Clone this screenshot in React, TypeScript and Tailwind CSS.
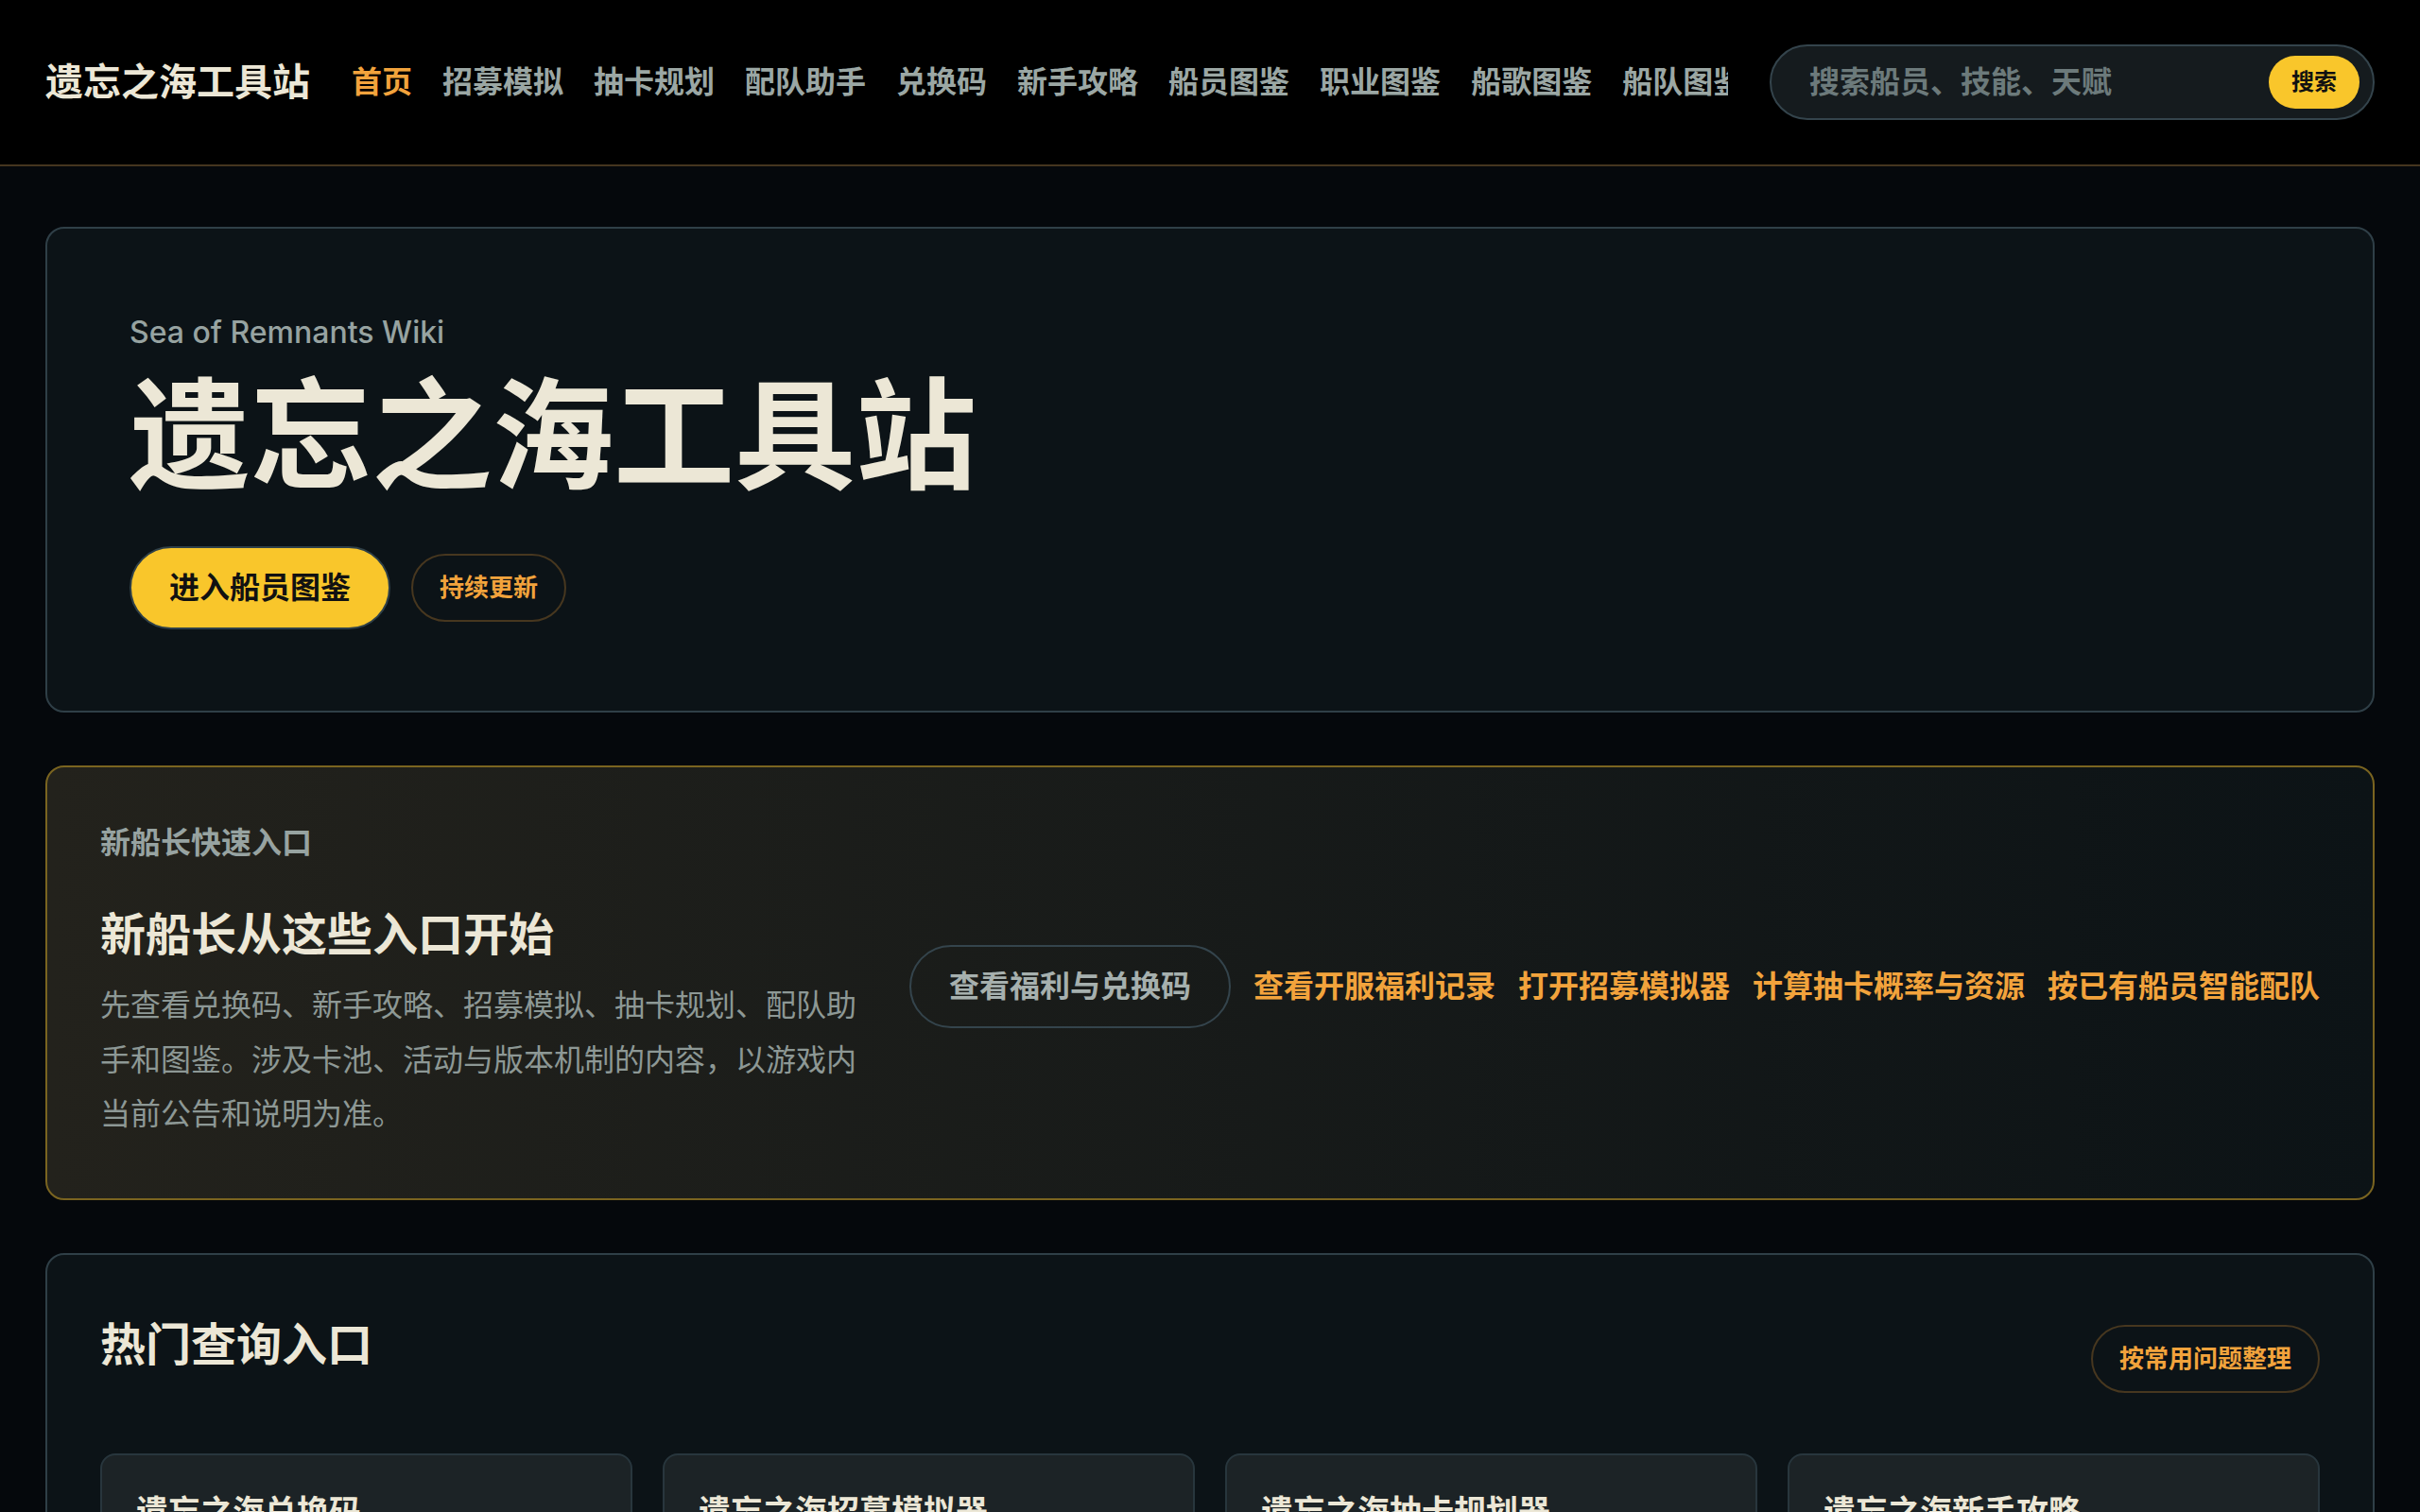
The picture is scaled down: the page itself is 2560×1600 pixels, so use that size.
const navItems = ['首页', '招募模拟', '抽卡规划', '配队助手', '兑换码', '新手攻略', '船员图鉴', '职业图鉴', '船歌图鉴', '船队图鉴', '更新日志'];

const quickLinks = ['查看开服福利记录', '打开招募模拟器', '计算抽卡概率与资源', '按已有船员智能配队'];

const hotCards = [
    { title: '遗忘之海兑换码', desc: '汇总当前可用的礼包码与领取方式，过期兑换码单独标注。' },
    { title: '遗忘之海招募模拟器', desc: '模拟不同卡池的招募结果，提前感受出货节奏。' },
    { title: '遗忘之海抽卡规划器', desc: '按现有资源估算抽数与保底进度，合理安排投入。' },
    { title: '遗忘之海新手攻略', desc: '从开局流程到航线推进，帮助新船长少走弯路。' },
];

export default function App() {
    return (
        <div className="h-screen overflow-hidden bg-[#05080c] font-['Inter','Noto_Sans_CJK_SC',sans-serif] text-[#ece7d6]">
            <header className="flex h-[176px] items-center gap-[44px] border-b-2 border-[#45351f] bg-black px-[48px]">
                <a className="shrink-0 text-[40px] font-bold leading-none text-[#ece7d6]">遗忘之海工具站</a>
                <nav className="flex min-w-0 flex-1 gap-[32px] overflow-hidden whitespace-nowrap">
                    {navItems.map((item, i) => (
                        <a
                            key={item}
                            className={
                                i === 0
                                    ? 'shrink-0 text-[32px] font-semibold leading-[48px] text-[#f2a33c]'
                                    : 'shrink-0 text-[32px] font-semibold leading-[48px] text-[#9ba7a4]'
                            }
                        >
                            {item}
                        </a>
                    ))}
                </nav>
                <form className="flex h-[80px] w-[640px] shrink-0 items-center rounded-full border-2 border-[#34444c] bg-[#151b1e] py-[10px] pl-[40px] pr-[14px]">
                    <input
                        placeholder="搜索船员、技能、天赋"
                        className="min-w-0 flex-1 bg-transparent text-[32px] font-semibold text-[#d8dcd8] placeholder:text-[#6c7a7b] focus:outline-none"
                    />
                    <button type="button" className="h-[56px] w-[96px] shrink-0 rounded-full bg-[#f9c62b] text-[24px] font-bold text-[#111]">
                        搜索
                    </button>
                </form>
            </header>

            <main className="flex flex-col gap-[56px] px-[48px] pt-[64px]">
                {/* hero */}
                <section className="rounded-[20px] border-2 border-[#2f3f47] bg-[#0c1317] px-[87px] pb-[86px] pt-[86px]">
                    <p className="text-[32px] font-medium leading-[48px] text-[#97a3a1]">Sea of Remnants Wiki</p>
                    <h1 className="mt-[16px] text-[128px] font-bold leading-[1.1] text-[#ece7d6]">遗忘之海工具站</h1>
                    <div className="mt-[45px] flex items-center gap-[22px]">
                        <a className="flex h-[88px] items-center rounded-full border-2 border-[#2f4048] bg-[#f9c62b] px-[40px] text-[32px] font-bold text-[#111]">
                            进入船员图鉴
                        </a>
                        <span className="flex h-[72px] items-center rounded-full border-2 border-[#47371f] px-[28px] text-[26px] font-semibold text-[#f2a33c]">
                            持续更新
                        </span>
                    </div>
                </section>

                {/* quick start */}
                <section className="flex items-center justify-between rounded-[20px] border-2 border-[#7a6420] bg-linear-to-r from-[#23221c] to-[#0c1316] px-[56px] pb-[60px] pt-[56px]">
                    <div className="w-[816px] shrink-0">
                        <p className="text-[32px] font-semibold leading-[48px] text-[#97a3a1]">新船长快速入口</p>
                        <h2 className="mt-[42px] text-[48px] font-bold leading-[1.3] text-[#ece7d6]">新船长从这些入口开始</h2>
                        <p className="mt-[15px] text-[32px] leading-[1.8] text-[#8d9895]">
                            先查看兑换码、新手攻略、招募模拟、抽卡规划、配队助手和图鉴。涉及卡池、活动与版本机制的内容，以游戏内当前公告和说明为准。
                        </p>
                    </div>
                    <div className="mt-[12px] flex items-center gap-[24px] whitespace-nowrap">
                        <a className="flex h-[88px] items-center rounded-full border-2 border-[#34444c] px-[40px] text-[32px] font-bold text-[#a6b0ae]">
                            查看福利与兑换码
                        </a>
                        {quickLinks.map((link) => (
                            <a key={link} className="text-[32px] font-bold text-[#f2a33c]">
                                {link}
                            </a>
                        ))}
                    </div>
                </section>

                {/* hot entries */}
                <section className="rounded-[20px] border-2 border-[#2f3f47] bg-[#0c1317] px-[56px] pb-[56px] pt-[62px]">
                    <div className="flex items-start justify-between">
                        <h2 className="mt-[2px] text-[48px] font-bold leading-[1.3] text-[#ece7d6]">热门查询入口</h2>
                        <span className="mt-[12px] flex h-[72px] items-center rounded-full border-2 border-[#47371f] px-[28px] text-[26px] font-semibold text-[#f2a33c]">
                            按常用问题整理
                        </span>
                    </div>
                    <div className="mt-[64px] grid grid-cols-4 gap-[32px]">
                        {hotCards.map((card) => (
                            <div key={card.title} className="rounded-[16px] border-2 border-[#28363d] bg-[#1c2326] p-[36px]">
                                <h3 className="text-[34px] font-bold leading-[1.4] text-[#ece7d6]">{card.title}</h3>
                                <p className="mt-[16px] text-[28px] leading-[1.7] text-[#8d9895]">{card.desc}</p>
                            </div>
                        ))}
                    </div>
                </section>
            </main>
        </div>
    );
}
